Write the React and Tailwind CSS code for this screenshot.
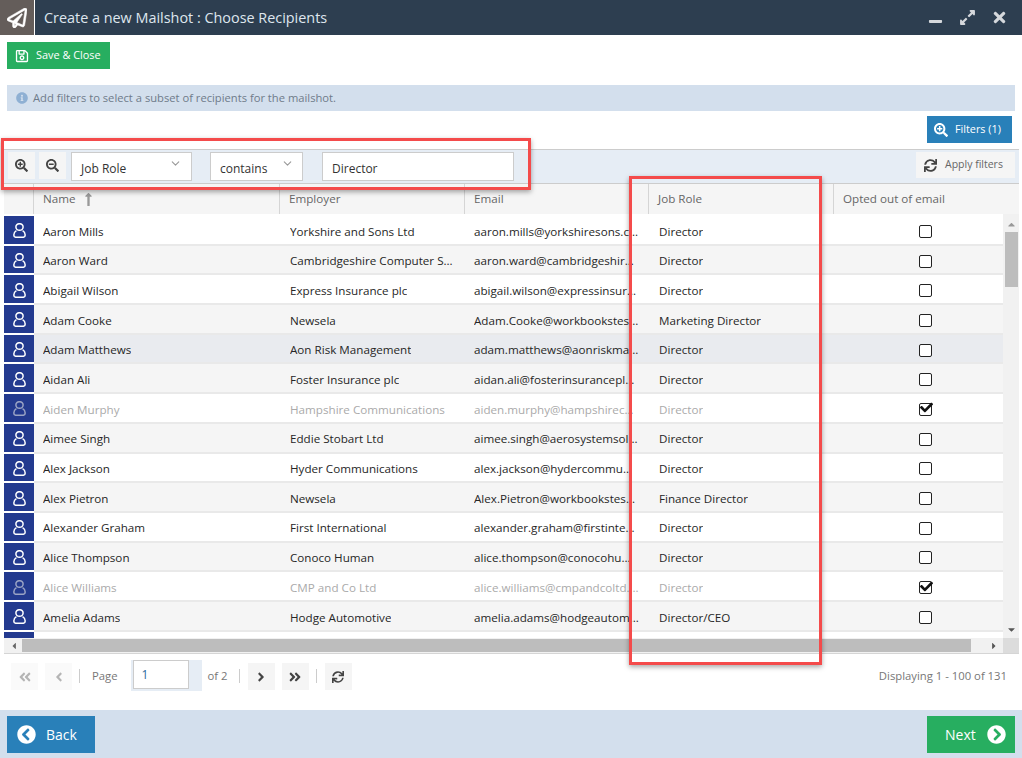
import {
  FaRegPaperPlane,
  FaRegSave,
  FaInfoCircle,
  FaSearchPlus,
  FaSearchMinus,
  FaSync,
  FaMinus,
  FaExpandAlt,
  FaTimes,
  FaLongArrowAltUp,
  FaAngleDoubleLeft,
  FaAngleDoubleRight,
  FaAngleLeft,
  FaAngleRight,
  FaChevronCircleLeft,
  FaChevronCircleRight,
  FaCheck,
  FaCaretUp,
  FaCaretDown,
  FaCaretLeft,
  FaCaretRight,
} from "react-icons/fa";
import { ChevronDown } from "lucide-react";

const rows = [
  ["Aaron Mills", "Yorkshire and Sons Ltd", "aaron.mills@yorkshiresons.co.uk", "Director"],
  ["Aaron Ward", "Cambridgeshire Computer Services", "aaron.ward@cambridgeshirecomputers.com", "Director"],
  ["Abigail Wilson", "Express Insurance plc", "abigail.wilson@expressinsurance.com", "Director"],
  ["Adam Cooke", "Newsela", "Adam.Cooke@workbookstest.com", "Marketing Director"],
  ["Adam Matthews", "Aon Risk Management", "adam.matthews@aonriskmanagement.com", "Director"],
  ["Aidan Ali", "Foster Insurance plc", "aidan.ali@fosterinsuranceplc.com", "Director"],
  ["Aiden Murphy", "Hampshire Communications", "aiden.murphy@hampshirecomms.com", "Director", true],
  ["Aimee Singh", "Eddie Stobart Ltd", "aimee.singh@aerosystemsolutions.com", "Director"],
  ["Alex Jackson", "Hyder Communications", "alex.jackson@hydercommunications.com", "Director"],
  ["Alex Pietron", "Newsela", "Alex.Pietron@workbookstest.com", "Finance Director"],
  ["Alexander Graham", "First International", "alexander.graham@firstinternational.com", "Director"],
  ["Alice Thompson", "Conoco Human", "alice.thompson@conocohuman.com", "Director"],
  ["Alice Williams", "CMP and Co Ltd", "alice.williams@cmpandcoltd.com", "Director", true],
  ["Amelia Adams", "Hodge Automotive", "amelia.adams@hodgeautomotive.com", "Director/CEO"],
  ["", "", "", ""],
];

const UserIcon = ({ className }) => (
  <svg viewBox="0 0 13 15" className={className} fill="none" stroke="currentColor" strokeWidth="1.5">
    <ellipse cx="6.5" cy="4" rx="3.6" ry="3.3" />
    <path d="M3.4 7.6C1.7 8.6.8 10.2.8 11.9c0 1.5 1 2.4 2.3 2.4h6.8c1.3 0 2.3-.9 2.3-2.4 0-1.7-.9-3.3-2.6-4.3" />
  </svg>
);

const GridRow = ({ row, index }) => {
  const [name, employer, email, role, optedOut] = row;
  let bg = index % 2 === 0 ? "bg-white" : "bg-[#f5f5f5]";
  if (index === 4) bg = "bg-[#e9ebef]";
  return (
    <div className={`flex h-[29.7px] shrink-0 border-b-2 border-[#e9e9e9] text-[11.65px] ${bg} ${optedOut ? "text-[#aaaaaa]" : "text-[#262626]"}`}>
      <div className="w-[30px] -mb-[2px] pt-[2px] border-b-2 border-white bg-[#233a8f] flex items-center justify-center shrink-0">
        <UserIcon className={`w-[13px] h-[15px] ${optedOut ? "text-[#9aa3c4]" : "text-white"}`} />
      </div>
      <div className="w-[246px] pl-[9px] pr-2 pt-[3px] flex items-center"><span className="truncate">{name}</span></div>
      <div className="w-[185px] pl-[10px] pr-2 pt-[3px] flex items-center"><span className="truncate">{employer}</span></div>
      <div className="w-[184px] pl-[9px] pr-[10px] pt-[3px] flex items-center"><span className="truncate">{email}</span></div>
      <div className="w-[185px] pl-[10px] pt-[3px] flex items-center"><span className="truncate">{role}</span></div>
      <div className="w-[169px] pl-[85px] pt-[3px] flex items-center">
        {name && (
          <span className="relative block w-[13px] h-[13px] rounded-[2px] border border-[#222222] bg-white">
            {optedOut && <FaCheck className="absolute left-[-0.5px] top-[-2.5px] text-[13px] text-[#111111]" />}
          </span>
        )}
      </div>
    </div>
  );
};

const PagerButton = ({ children, faded }) => (
  <button className={`w-[27px] h-[27px] flex items-center justify-center ${faded ? "bg-[#fafafa] text-[#b5b5b5]" : "bg-[#f5f5f5] text-[#444444]"}`}>
    {children}
  </button>
);

const App = () => {
  return (
    <div className="relative w-[1022px] h-[758px] overflow-hidden bg-white flex flex-col font-['Open_Sans',sans-serif] text-[12px] text-[#333333]">
      {/* Title bar */}
      <div className="h-[35px] shrink-0 bg-[#2d3e50] flex items-center">
        <div className="w-[34px] h-full bg-[#645d5a] flex items-center justify-center border-r border-white box-content">
          <FaRegPaperPlane className="text-white stroke-white stroke-[14px] text-[20px]" />
        </div>
        <h1 className="ml-[9px] text-[14.4px] text-[#dfe6ee] flex-1">Create a new Mailshot : Choose Recipients</h1>
        <div className="flex items-center text-[#d5d8dc] mr-[14px]">
          <FaMinus className="text-[15px] mt-[7px] mr-[16px]" />
          <FaExpandAlt className="text-[17px] mr-[15px]" />
          <FaTimes className="text-[17px]" />
        </div>
      </div>

      {/* Toolbar */}
      <div className="pl-[7px] pt-[7px]">
        <button className="w-[103px] h-[27px] bg-[#27ae60] text-white text-[10.9px] flex items-center pl-[8px]">
          <FaRegSave className="text-[14px] mr-[7px]" />
          Save &amp; Close
        </button>
      </div>

      {/* Info */}
      <div className="mt-[16px] ml-[7px] w-[1008px] h-[26px] bg-[#d3dfed] flex items-center pl-[9px] text-[11.2px] text-[#6f7b8a]">
        <FaInfoCircle className="text-[12px] text-[#8fb0d3] mr-[5px]" />
        Add filters to select a subset of recipients for the mailshot.
      </div>

      <div className="flex justify-end pr-[10px] pt-[5px]">
        <button className="w-[85px] h-[27px] bg-[#2980b9] text-white text-[10.8px] flex items-center pl-[7px]">
          <FaSearchPlus className="text-[14px] mr-[7px]" />
          Filters (1)
        </button>
      </div>

      {/* Grid */}
      <div className="ml-[4px] mt-[6px] w-[1015px] flex flex-col">
        <div className="h-[35px] bg-[#e6edf5] border-t border-b border-[#cccccc] flex items-start pt-[2px]">
          <button className="ml-[4px] w-[27px] h-[27px] bg-[#f5f5f5] flex items-center justify-center text-[#444444]">
            <FaSearchPlus className="text-[13px]" />
          </button>
          <button className="ml-[4px] w-[27px] h-[27px] bg-[#f5f5f5] flex items-center justify-center text-[#444444]">
            <FaSearchMinus className="text-[13px]" />
          </button>
          <div className="ml-[5px] w-[121px] h-[29px] bg-white border border-[#cccccc] flex items-center justify-between pl-[9px] pr-[9px]">
            <span className="mt-[4px]">Job Role</span>
            <ChevronDown className="w-[13px] h-[13px] text-[#999999] mb-[7px]" />
          </div>
          <div className="ml-[18px] w-[93px] h-[29px] bg-white border border-[#cccccc] flex items-center justify-between pl-[9px] pr-[8px]">
            <span className="mt-[4px]">contains</span>
            <ChevronDown className="w-[13px] h-[13px] text-[#999999] mb-[7px]" />
          </div>
          <div className="ml-[19px] w-[192px] h-[29px] bg-white border border-[#cccccc] flex items-center pl-[9px]">
            <span className="mt-[4px]">Director</span>
          </div>
          <button className="ml-auto mr-[4px] w-[99px] h-[26px] bg-[#f5f5f5] flex items-center pl-[8px] text-[10.5px] text-[#666666]">
            <FaSync className="text-[13px] text-[#444444] mr-[8px]" />
            Apply filters
          </button>
        </div>

        {/* Column headers */}
        <div className="flex h-[30px] bg-[#f5f5f5] text-[#666666] text-[11.65px]">
          <div className="w-[30px] border-r border-[#d5d5d5]"></div>
          <div className="w-[246px] pl-[9px] border-r border-[#d5d5d5] flex items-center">
            Name
            <FaLongArrowAltUp className="ml-[5px] text-[15px] text-[#999999]" />
          </div>
          <div className="w-[185px] pl-[9px] border-r border-[#d5d5d5] flex items-center">Employer</div>
          <div className="w-[184px] pl-[9px] border-r border-[#d5d5d5] flex items-center">Email</div>
          <div className="w-[185px] pl-[9px] border-r border-[#d5d5d5] flex items-center">Job Role</div>
          <div className="flex-1 pl-[9px] flex items-center">Opted out of email</div>
        </div>

        {/* Rows and scrollbars */}
        <div className="flex h-[424px]">
          <div className="w-[999px] pt-[2px] flex flex-col overflow-hidden">
            {rows.map((row, i) => (
              <GridRow key={i} row={row} index={i} />
            ))}
          </div>
          <div className="w-[16px] bg-[#f1f1f1] flex flex-col items-center">
            <FaCaretUp className="text-[11px] text-[#999999] mt-[5px]" />
            <div className="w-[13px] h-[55px] bg-[#bdbdbd] mt-[2px]"></div>
            <FaCaretDown className="text-[11px] text-[#555555] mt-auto mb-[3px]" />
          </div>
        </div>
        <div className="flex h-[16px] border-b border-[#d5d5d5]">
          <div className="w-[999px] bg-[#f1f1f1] flex items-center">
            <FaCaretLeft className="text-[10px] text-[#666666] ml-[5px]" />
            <div className="ml-[3px] w-[949px] h-[13px] bg-[#bdbdbd]"></div>
            <FaCaretRight className="text-[10px] text-[#555555] ml-[18px]" />
          </div>
          <div className="w-[16px] bg-[#dcdcdc]"></div>
        </div>
      </div>

      {/* Pager */}
      <div className="h-[56px] pl-[11px] pr-[15px] pt-[6px] flex items-start text-[11.3px] text-[#777777]">
        <div className="mt-[3px]"><PagerButton faded><FaAngleDoubleLeft className="text-[14px]" /></PagerButton></div>
        <div className="mt-[3px] ml-[7px]"><PagerButton faded><FaAngleLeft className="text-[14px]" /></PagerButton></div>
        <div className="ml-[7px] mt-[9px] w-px h-[14px] bg-[#cccccc]"></div>
        <span className="ml-[12px] mt-[8px]">Page</span>
        <div className="ml-[13px] w-[71px] h-[31px] bg-[#e6edf5]">
          <div className="ml-[2px] w-[56px] h-[29px] bg-white border border-[#cccccc] flex items-center pl-[8px] text-[12px] text-[#2a6a9e]">1</div>
        </div>
        <span className="ml-[6px] mt-[8px]">of 2</span>
        <div className="ml-[11px] mt-[9px] w-px h-[14px] bg-[#cccccc]"></div>
        <div className="mt-[3px] ml-[8px]"><PagerButton><FaAngleRight className="text-[14px]" /></PagerButton></div>
        <div className="mt-[3px] ml-[7px]"><PagerButton><FaAngleDoubleRight className="text-[14px]" /></PagerButton></div>
        <div className="ml-[7px] mt-[9px] w-px h-[14px] bg-[#cccccc]"></div>
        <div className="mt-[3px] ml-[8px]"><PagerButton><FaSync className="text-[12px]" /></PagerButton></div>
        <span className="ml-auto mt-[8px]">Displaying 1 - 100 of 131</span>
      </div>

      {/* Footer */}
      <div className="flex-1 bg-[#d3dfed] flex items-start justify-between pl-[7px] pr-[7px] pt-[6px]">
        <button className="w-[88px] h-[37px] bg-[#2980b9] text-white text-[14px] flex items-center pl-[10px]">
          <FaChevronCircleLeft className="text-[19px] mr-[10px]" />
          Back
        </button>
        <button className="w-[88px] h-[37px] bg-[#27ae60] text-white text-[14px] flex items-center pl-[18px]">
          Next
          <FaChevronCircleRight className="text-[19px] ml-[11px]" />
        </button>
      </div>

      {/* Red callouts drawn over the screen */}
      <div className="absolute left-[1px] top-[138px] w-[530px] h-[52px] border-[3px] border-[#f44b4b] shadow-[0_2px_5px_rgba(0,0,0,0.35)]"></div>
      <div className="absolute left-[629px] top-[176px] w-[193px] h-[489px] border-[3px] border-[#f44b4b] shadow-[0_2px_5px_rgba(0,0,0,0.35)]"></div>
    </div>
  );
};

export default App;
